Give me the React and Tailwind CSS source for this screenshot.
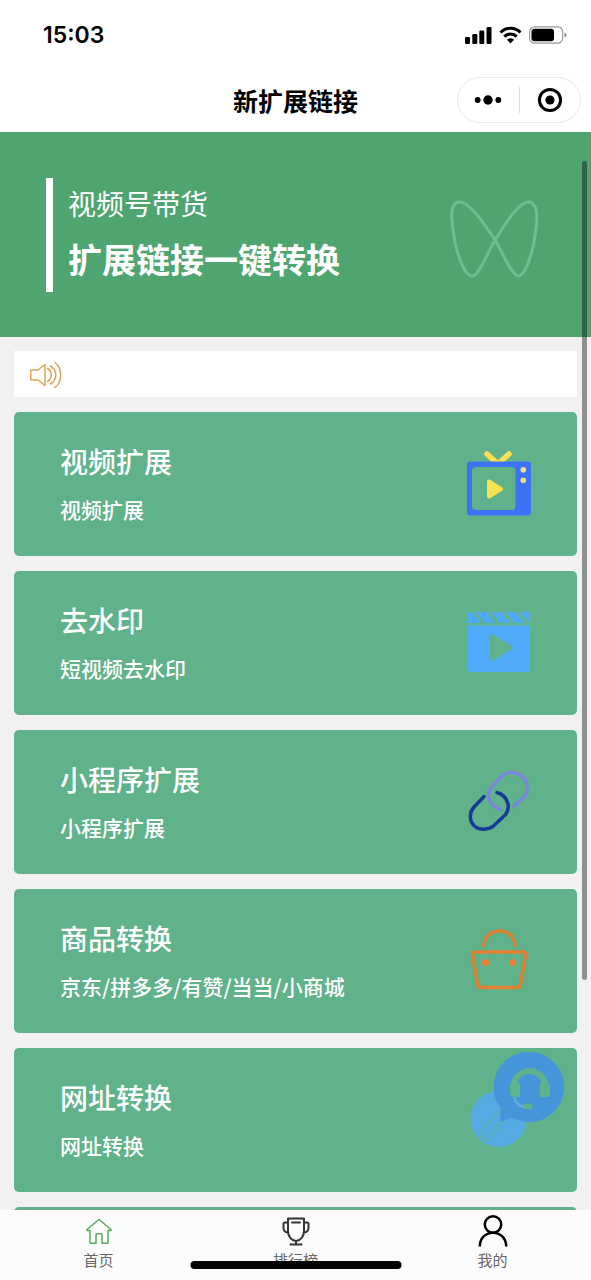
import React from 'react';

function TvIcon() {
  return (
    <svg className="h-[70px] w-[70px]" viewBox="0 1 70 70" fill="none" aria-hidden="true">
      <path d="M23 7l11 10L45 7" stroke="#fae150" strokeWidth="5.500" strokeLinecap="round" strokeLinejoin="round" />
      <path fillRule="evenodd" fill="#3c73f5" d="M6 14.500h58a3 3 0 0 1 3 3v48a3 3 0 0 1-3 3H6a3 3 0 0 1-3-3v-48a3 3 0 0 1 3-3zM12 20a4 4 0 0 0-4 4v35a4 4 0 0 0 4 4h35.500a4 4 0 0 0 4-4V24a4 4 0 0 0-4-4z" />
      <circle cx="59.300" cy="22.700" r="2.800" fill="#f7dd7a" />
      <circle cx="59.300" cy="33.300" r="2.800" fill="#f7dd7a" />
      <path d="M25 34.500v15l12-7.500z" fill="#fae150" stroke="#fae150" strokeWidth="4" strokeLinejoin="round" />
    </svg>
  );
}

function ClapperIcon() {
  return (
    <svg className="h-[70px] w-[70px]" viewBox="0 1 70 70" fill="#50aafa" aria-hidden="true">
      <path d="M6 6h2l9 11H4V8a2 2 0 0 1 2-2zM12 6h10.500l9 11h-10.500zM27 6h10.500l9 11H36zM41.500 6H52l9 11H50.500zM56 6h8a2 2 0 0 1 2 2v9z" />
      <path fillRule="evenodd" d="M4 19.500h62V63a3 3 0 0 1-3 3H7a3 3 0 0 1-3-3zM29 28.500q-3-1.500-3 2v22q0 3.500 3 2l18.500-11.500q2-1.500 0-3z" />
    </svg>
  );
}

function ChainIcon() {
  return (
    <svg className="h-[70px] w-[70px]" viewBox="0 0 70 70" fill="none" strokeWidth="3.500" strokeLinecap="round" aria-hidden="true">
      <path d="M36.500 43.500C25 40 21.500 28 28 20.500L39 9.500C44 5 51 5 57 9.500C64 15 65 25 60 31L50 40.500" stroke="#7b86dc" />
      <path d="M20 30.500L10 41C4.500 47 5.500 56 11 60.500C16 64.500 24 64 29 60.500L40.500 49.500C47 43 45 30 33 26.500" stroke="#173a99" />
    </svg>
  );
}

function BagIcon() {
  return (
    <svg className="h-[70px] w-[70px]" viewBox="0 1 70 70" fill="none" stroke="#df8235" strokeWidth="3.500" aria-hidden="true">
      <path d="M20 23v-1c0-20 31-20 31 0v1" />
      <path d="M11 28h48q3 0 2.500 3l-5 29q-.6 3.500-4 3.500h-35q-3.400 0-4-3.500l-5-29q-.5-3 2.500-3z" strokeLinejoin="round" />
      <circle cx="21.500" cy="38.500" r="3.500" fill="#f07c30" stroke="none" />
      <circle cx="48.500" cy="38.500" r="3.500" fill="#f07c30" stroke="none" />
    </svg>
  );
}

function LinkDiscIcon() {
  return (
    <svg className="h-[70px] w-[70px]" viewBox="0 0 70 70" fill="none" aria-hidden="true">
      <circle cx="34.500" cy="35" r="28" fill="#55aae1" />
      <g transform="rotate(-49 28 43)" stroke="#5bb3a8" strokeWidth="1.200">
        <path d="M38 48.500H18q-5 0-5-5.500t5-5.500h22q4 0 6 3" />
        <path d="M38 48.500q2-3 0-3H22q-3 0-3-2.500" />
      </g>
    </svg>
  );
}

function SupportIcon() {
  return (
    <svg className="h-[72px] w-[72px]" viewBox="0 0 72 72" aria-hidden="true">
      <path fill="#4694d9" d="M36 0a35 35 0 1 1-17 65.500l-12 4 1-13A35 35 0 0 1 36 0z" />
      <path d="M20.500 35a16 16 0 0 1 32 0" fill="none" stroke="#60b28a" strokeWidth="6" />
      <path d="M17 33q0-2 2-2h8v14h-5q-5 0-5-4zM47 31h8q2 0 2 2v10q0 2-2 2h-8z" fill="#60b28a" />
      <path d="M21 45q3 10 12 10" fill="none" stroke="#60acd9" strokeWidth="3" />
      <rect x="30.500" y="51.500" width="9" height="5.500" rx="1.500" fill="#60b28a" />
    </svg>
  );
}

const cards = [
  { title: '视频扩展', text: '视频扩展', Icon: TvIcon },
  { title: '去水印', text: '短视频去水印', Icon: ClapperIcon },
  { title: '小程序扩展', text: '小程序扩展', Icon: ChainIcon },
  { title: '商品转换', text: '京东/拼多多/有赞/当当/小商城', Icon: BagIcon },
  { title: '网址转换', text: '网址转换', Icon: LinkDiscIcon },
];

function StatusBar() {
  return (
    <div className="flex h-[70px] items-center justify-between pr-6 pl-[43px]">
      <span className="font-['Inter',sans-serif] text-[23px] leading-7 font-semibold">15:03</span>
      <div className="flex items-center gap-[7px]">
        <svg className="h-[18px] w-[27px]" viewBox="0 0 27 18" aria-hidden="true">
          <rect x="0" y="11" width="5" height="7" rx="1.300" />
          <rect x="7.300" y="8" width="5" height="10" rx="1.300" />
          <rect x="14.300" y="4.500" width="5" height="13.500" rx="1.300" />
          <rect x="21.500" y="1" width="5" height="17" rx="1.300" />
        </svg>
        <svg className="h-[18px] w-[23px]" viewBox="0 0 23 18" fill="none" aria-hidden="true">
          <path d="M1.500 6.500C7 .9 16 .9 21.500 6.500M5.300 10.600c3.500-3.500 8.900-3.500 12.400 0" stroke="#000" strokeWidth="3" />
          <path d="M8 13.700q3.500-2.800 7 0L11.500 17.500z" fill="#000" />
        </svg>
        <svg className="h-[18px] w-[38px]" viewBox="0 0 38 18" fill="none" aria-hidden="true">
          <rect x=".6" y=".8" width="33" height="16.400" rx="5" stroke="#999" strokeWidth="1.200" />
          <rect x="2.500" y="2.800" width="22.500" height="12.400" rx="3" fill="#000" />
          <path d="M35.500 6.500q2 .7 2 2.500t-2 2.500z" fill="#888" />
        </svg>
      </div>
    </div>
  );
}

function NavBar() {
  return (
    <div className="grid h-[62px] grid-cols-[1fr_auto_1fr] items-center pb-[2px]">
      <h1 className="col-start-2 text-[25px] leading-8 font-bold">新扩展链接</h1>
      <div className="mr-[10px] flex h-[46px] w-[124px] items-center justify-self-end rounded-full border border-[#e8e8e8]">
        <button type="button" aria-label="更多" className="flex flex-1 justify-center">
          <svg className="h-3 w-7" viewBox="0 0 28 12" aria-hidden="true">
            <circle cx="3.700" cy="6" r="2.900" />
            <circle cx="14" cy="6" r="4.700" />
            <circle cx="24.300" cy="6" r="2.900" />
          </svg>
        </button>
        <span className="h-[26px] w-px bg-[#dcdcdc]" />
        <button type="button" aria-label="关闭" className="flex flex-1 justify-center">
          <svg className="h-[26px] w-[26px]" viewBox="0 0 26 26" aria-hidden="true">
            <circle cx="13" cy="13" r="10.600" fill="none" stroke="#000" strokeWidth="3" />
            <circle cx="13" cy="13" r="4.600" />
          </svg>
        </button>
      </div>
    </div>
  );
}

function Hero() {
  return (
    <section className="flex h-[205px] items-center justify-between bg-[#4fa570] pr-[53px] pl-[46px] text-white">
      <div className="flex h-[114px] flex-col justify-center gap-2 border-l-[7px] border-white pl-[15px]">
        <p className="text-[28px] leading-10">视频号带货</p>
        <p className="text-[34px] leading-[56px] font-bold">扩展链接一键转换</p>
      </div>
      <svg className="mt-2 h-20 w-[88px]" viewBox="0 0 88 80" fill="none" stroke="#6bbf92" strokeWidth="3" aria-hidden="true">
        <path d="M45 41C34 24 18 1 8 3C-2 6 2 25 5 43C9 62 16 78 23 77C29 76 37 55 45 41C55 26 69 1 80 3C90 6 87 26 84 43C80 62 74 77 68 77C62 76 54 57 45 41z" />
      </svg>
    </section>
  );
}

function Notice() {
  return (
    <div className="flex h-[46px] items-center bg-white px-4">
      <svg className="h-7 w-8" viewBox="0 0 32 28" fill="none" stroke="#dfa356" strokeWidth="1.500" strokeLinejoin="round" strokeLinecap="round" aria-hidden="true">
        <path d="M1.500 10h6.500l7-5.500v21L8 20H1.500q-.7 0-.7-.7v-8.600q0-.7.700-.7z" />
        <path d="M17.500 8.500c5 3 5 10 0 13M20.500 6c7 4.500 7 13.500 0 18M25 2.500c7.500 6 7.500 19 0 25" />
      </svg>
    </div>
  );
}

function Card({ title, text, Icon }) {
  return (
    <a href="#" className="flex h-36 items-center justify-between rounded-[5px] bg-[#60b28a] pr-[43px] pb-[3px] pl-[46px] text-white">
      <span className="flex flex-col gap-3">
        <span className="text-[28px] leading-10 font-medium">{title}</span>
        <span className="text-[21px] leading-8 font-medium">{text}</span>
      </span>
      <Icon />
    </a>
  );
}

function TabBar() {
  return (
    <nav className="relative grid h-[70px] shrink-0 grid-cols-3 bg-[#fcfcfc] text-[15px] leading-5 text-[#666]">
      <a href="#" className="flex flex-col items-center pt-1">
        <svg className="h-9 w-9" viewBox="0 0 36 36" fill="none" stroke="#5aaa60" strokeWidth="1.500" strokeLinejoin="round" aria-hidden="true">
          <path d="M18 5.500L6 15.500v1h3V28.500q0 .8.800.8h5.200V21q0-1.200 1-1.200h4q1 0 1 1.200v8.300h5.200q.8 0 .8-.8V16.500h3v-1z" />
        </svg>
        首页
      </a>
      <a href="#" className="flex flex-col items-center pt-1">
        <svg className="h-9 w-9" viewBox="0 0 36 36" fill="none" stroke="#333" strokeWidth="2" strokeLinejoin="round" strokeLinecap="round" aria-hidden="true">
          <path d="M10 4.500h16v12q0 9-8 10.500-8-1.500-8-10.500zM18 27v3M12.500 30.500h11M10 8.500H7q-1.500 0-1.500 1.500v4q0 4 4.500 4.500M26 8.500h3q1.500 0 1.500 1.500v4q0 4-4.500 4.500M14 8.500h8" />
        </svg>
        排行榜
      </a>
      <a href="#" className="flex flex-col items-center pt-1">
        <svg className="h-9 w-9" viewBox="0 0 36 36" fill="none" stroke="#000" strokeWidth="2.500" aria-hidden="true">
          <circle cx="18" cy="10.500" r="8.200" />
          <path d="M4.800 32.500C4.800 14 31.200 14 31.200 32.500" />
        </svg>
        我的
      </a>
      <span className="absolute bottom-[11px] left-1/2 h-2 w-[211px] -translate-x-1/2 rounded-full bg-black" />
    </nav>
  );
}

export default function App() {
  return (
    <div className="flex h-screen flex-col bg-[#f1f1f1] font-['Noto_Sans_CJK_SC',sans-serif] text-black">
      <header className="shrink-0 bg-white">
        <StatusBar />
        <NavBar />
      </header>
      <div className="relative min-h-0 flex-1">
        <main className="h-full overflow-y-auto [scrollbar-width:none]">
          <Hero />
          <div className="flex flex-col gap-[15px] px-[14px] pt-[14px] pb-4">
            <Notice />
            {cards.map((card) => (
              <Card key={card.title} {...card} />
            ))}
            <div className="h-36 shrink-0 rounded-[5px] bg-[#60b28a]" />
          </div>
        </main>
        <span className="absolute top-[29px] right-1 h-[76%] w-[5px] rounded-full bg-black/40" />
        <button type="button" aria-label="客服" className="absolute right-[26px] bottom-[86px]">
          <SupportIcon />
        </button>
      </div>
      <TabBar />
    </div>
  );
}
